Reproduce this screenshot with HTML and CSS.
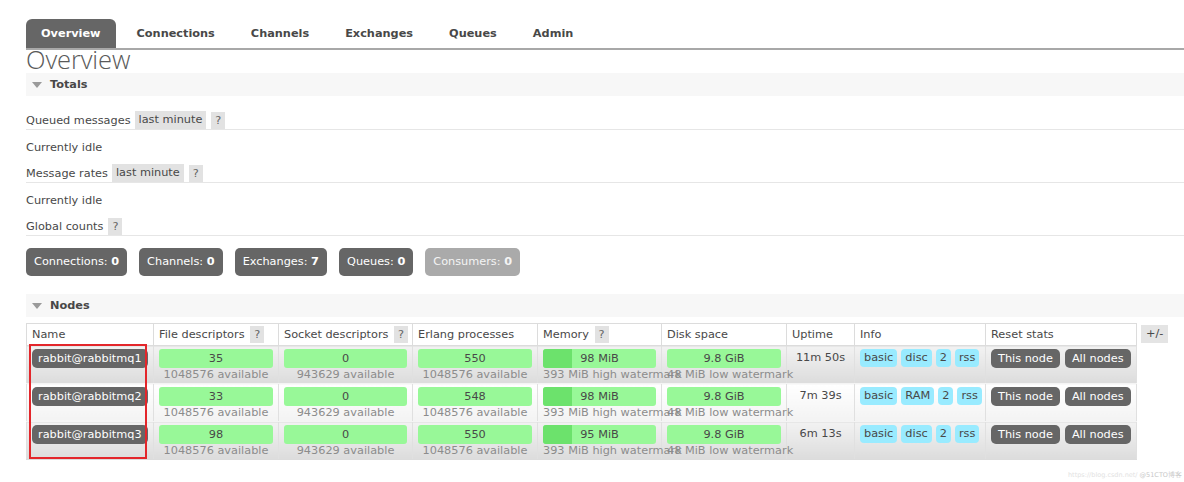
FILE: index.html
```html
<!DOCTYPE html>
<html lang="en">
<head>
<meta charset="utf-8">
<title>RabbitMQ Management - Overview</title>
<link rel="stylesheet" href="styles.css">
</head>
<body>
<div class="page">
  <nav class="tabs">
    <a class="tab active">Overview</a>
    <a class="tab">Connections</a>
    <a class="tab">Channels</a>
    <a class="tab">Exchanges</a>
    <a class="tab">Queues</a>
    <a class="tab">Admin</a>
  </nav>
  <h1 class="title">Overview</h1>

  <div class="section-head"><span class="tri"></span>Totals</div>
  <div class="sub"><span>Queued messages</span><span class="pill">last minute</span><span class="help">?</span></div>
  <p class="idle">Currently idle</p>
  <div class="sub"><span>Message rates</span><span class="pill">last minute</span><span class="help">?</span></div>
  <p class="idle">Currently idle</p>
  <div class="sub"><span>Global counts</span><span class="help">?</span></div>

  <div class="counts">
    <a class="count">Connections: <b>0</b></a>
    <a class="count">Channels: <b>0</b></a>
    <a class="count">Exchanges: <b>7</b></a>
    <a class="count">Queues: <b>0</b></a>
    <a class="count dim">Consumers: <b>0</b></a>
  </div>

  <div class="section-head nodes-head"><span class="tri"></span>Nodes</div>

  <div class="nodes-wrap">
    <div class="table-box">
      <table class="nodes">
        <colgroup>
          <col class="c-name"><col class="c-fd"><col class="c-sd"><col class="c-ep"><col class="c-mem"><col class="c-disk"><col class="c-up"><col class="c-info"><col class="c-reset">
        </colgroup>
        <thead>
          <tr>
            <th>Name</th>
            <th>File descriptors <span class="help">?</span></th>
            <th>Socket descriptors <span class="help">?</span></th>
            <th>Erlang processes</th>
            <th>Memory <span class="help">?</span></th>
            <th>Disk space</th>
            <th>Uptime</th>
            <th>Info</th>
            <th>Reset stats</th>
          </tr>
        </thead>
        <tbody>
          <tr class="alt1">
            <td class="name"><span class="node">rabbit@rabbitmq1</span></td>
            <td><div class="bar">35</div><div class="note">1048576 available</div></td>
            <td><div class="bar">0</div><div class="note">943629 available</div></td>
            <td><div class="bar">550</div><div class="note">1048576 available</div></td>
            <td><div class="bar mem"><span class="used"></span><span class="val">98 MiB</span></div><div class="note">393 MiB high watermark</div></td>
            <td><div class="bar">9.8 GiB</div><div class="note">48 MiB low watermark</div></td>
            <td class="up">11m 50s</td>
            <td class="info"><span class="tag">basic</span><span class="tag">disc</span><span class="tag">2</span><span class="tag">rss</span></td>
            <td class="reset"><span class="btn">This node</span><span class="btn">All nodes</span></td>
          </tr>
          <tr class="alt2">
            <td class="name"><span class="node">rabbit@rabbitmq2</span></td>
            <td><div class="bar">33</div><div class="note">1048576 available</div></td>
            <td><div class="bar">0</div><div class="note">943629 available</div></td>
            <td><div class="bar">548</div><div class="note">1048576 available</div></td>
            <td><div class="bar mem"><span class="used"></span><span class="val">98 MiB</span></div><div class="note">393 MiB high watermark</div></td>
            <td><div class="bar">9.8 GiB</div><div class="note">48 MiB low watermark</div></td>
            <td class="up">7m 39s</td>
            <td class="info"><span class="tag">basic</span><span class="tag">RAM</span><span class="tag">2</span><span class="tag">rss</span></td>
            <td class="reset"><span class="btn">This node</span><span class="btn">All nodes</span></td>
          </tr>
          <tr class="alt1">
            <td class="name"><span class="node">rabbit@rabbitmq3</span></td>
            <td><div class="bar">98</div><div class="note">1048576 available</div></td>
            <td><div class="bar">0</div><div class="note">943629 available</div></td>
            <td><div class="bar">550</div><div class="note">1048576 available</div></td>
            <td><div class="bar mem"><span class="used"></span><span class="val">95 MiB</span></div><div class="note">393 MiB high watermark</div></td>
            <td><div class="bar">9.8 GiB</div><div class="note">48 MiB low watermark</div></td>
            <td class="up">6m 13s</td>
            <td class="info"><span class="tag">basic</span><span class="tag">disc</span><span class="tag">2</span><span class="tag">rss</span></td>
            <td class="reset"><span class="btn">This node</span><span class="btn">All nodes</span></td>
          </tr>
        </tbody>
      </table>
      <div class="mark"></div>
    </div>
    <span class="plusminus">+/-</span>
  </div>

  <div class="footer">https://blog.csdn.net/ <span>@51CTO博客</span></div>
</div>
</body>
</html>
```
FILE: styles.css
```css
* { box-sizing: border-box; }

html, body {
  margin: 0;
  padding: 0;
  background: #fff;
}

body {
  font-family: "DejaVu Sans", Verdana, sans-serif;
  font-size: 11.3px;
  color: #484848;
}

.page {
  padding: 19px 0 0 26px;
}

/* tabs */
.tabs {
  display: flex;
  border-bottom: 2px solid #a8a8a8;
}
.tab {
  display: block;
  height: 29px;
  line-height: 28px;
  padding: 1px 15px 0;
  margin-right: 6px;
  font-weight: bold;
  color: #484848;
  border-radius: 6px 6px 0 0;
}
.tab.active {
  background: #666;
  color: #fff;
}

.title {
  margin: 0 0 4px;
  font-family: "Open Sans", "DejaVu Sans", sans-serif;
  font-weight: 300;
  font-size: 25.5px;
  line-height: 19px;
  color: #5a5a5a;
  letter-spacing: -0.1px;
}

/* section header */
.section-head {
  display: flex;
  align-items: center;
  height: 23px;
  background: #f7f7f7;
  padding-left: 6px;
  font-weight: bold;
  color: #484848;
}
.tri {
  width: 0;
  height: 0;
  border-left: 5px solid transparent;
  border-right: 5px solid transparent;
  border-top: 6px solid #9a9a9a;
  margin-right: 8px;
}

.sub {
  display: flex;
  align-items: center;
  gap: 4px;
  height: 19px;
  border-bottom: 1px solid #e6e6e6;
}
.section-head + .sub { margin-top: 15px; }

.pill {
  background: #e2e2e2;
  padding: 0 4px;
  line-height: 18px;
}
.help {
  display: inline-block;
  background: #e2e2e2;
  color: #666;
  padding: 0 4px;
  line-height: 17px;
  margin-left: 1px;
}

.idle {
  margin: 0;
  padding: 10px 0 9px;
  line-height: 15px;
}

/* global counts */
.counts {
  display: flex;
  gap: 12px;
  margin: 12px 0 18px;
}
.count {
  display: block;
  background: #666;
  color: #fff;
  line-height: 28px;
  padding: 0 8px;
  border-radius: 5px;
}
.count b { font-weight: bold; }
.count.dim {
  background: #aaa;
  color: #f4f4f4;
}

.nodes-head { margin-bottom: 6px; }

/* nodes table */
.nodes-wrap {
  display: flex;
  align-items: flex-start;
}
.table-box {
  position: relative;
}
.nodes {
  border-collapse: collapse;
  table-layout: fixed;
  width: 1110px;
}
.c-name { width: 127px; }
.c-fd { width: 125px; }
.c-sd { width: 134px; }
.c-ep { width: 125px; }
.c-mem { width: 124px; }
.c-disk { width: 125px; }
.c-up { width: 68px; }
.c-info { width: 131px; }
.c-reset { width: 151px; }

.nodes th {
  text-align: left;
  font-weight: normal;
  padding: 2px 5px;
  line-height: 17px;
  border: 1px solid #dcdcdc;
  background: #fff;
  white-space: nowrap;
}
.nodes th .help { margin-left: 2px; }

.nodes td {
  padding: 3px 5px 1px;
  vertical-align: top;
  text-align: center;
  white-space: nowrap;
  border: 1px solid #e0e0e0;
  border-top-color: #f4f4f4;
  border-bottom-color: #f4f4f4;
}
.nodes tr:last-child td { border-bottom-color: #dcdcdc; }
.alt1 td { background: linear-gradient(#f2f2f2, #dcdcdc); }
.alt2 td { background: linear-gradient(#ffffff, #f3f3f3); }

.nodes td.name { text-align: left; }
.node {
  display: inline-block;
  background: #666;
  color: #fff;
  line-height: 19px;
  padding: 0 6px;
  border-radius: 5px;
}

.bar {
  position: relative;
  background: #98f898;
  border-radius: 3px;
  line-height: 19px;
  height: 19px;
  color: #484848;
  overflow: hidden;
}
.bar.mem .used {
  position: absolute;
  left: 0;
  top: 0;
  bottom: 0;
  width: 29px;
  background: #6ce26c;
}
.bar.mem .val { position: relative; }

.note {
  color: #8c8c8c;
  line-height: 14px;
}

.nodes td.up { padding-top: 5px; line-height: 14px; }

.info { text-align: left !important; }
.tag {
  display: inline-block;
  background: #99ebff;
  color: #484848;
  line-height: 18px;
  padding: 0 4px;
  border-radius: 4px;
  margin-right: 4px;
}

.reset { text-align: left !important; }
.btn {
  display: inline-block;
  background: #666;
  color: #fff;
  line-height: 19px;
  padding: 0 7px;
  border-radius: 5px;
  margin-right: 5px;
}

.mark {
  position: absolute;
  left: 3px;
  top: 21px;
  width: 118px;
  height: 115px;
  border: 2px solid #e3262b;
  pointer-events: none;
}

.plusminus {
  margin: 2px 0 0 4px;
  background: #e4e4e4;
  line-height: 18px;
  padding: 0 5px;
  color: #484848;
}

.footer {
  text-align: right;
  font-size: 6.5px;
  color: #e2e2e2;
  margin-top: 11px;
  padding-right: 2px;
}
.footer span { color: #c8c8c8; }
```
